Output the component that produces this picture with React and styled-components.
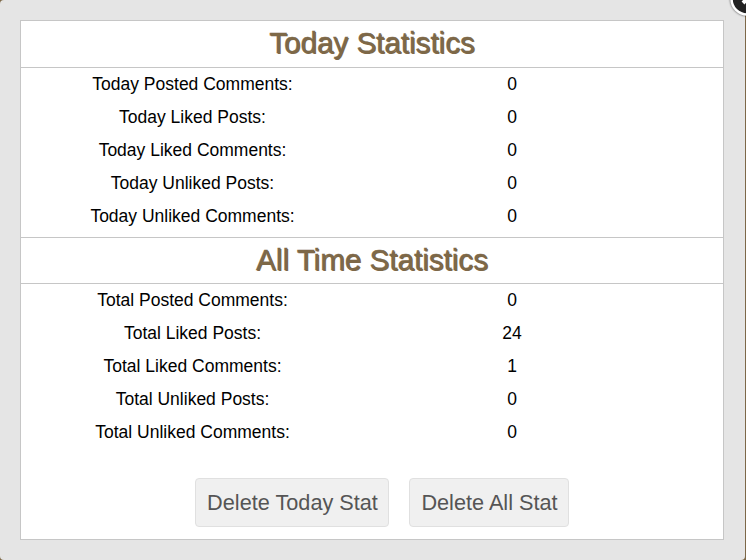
import styled, { createGlobalStyle } from "styled-components";

const GlobalStyle = createGlobalStyle`
  body {
    margin: 0;
    background-color: #7d6848;
    font-family: "Liberation Sans", Arial, sans-serif;
    overflow: hidden;
  }
`;

const Popup = styled.div`
  position: relative;
  box-sizing: border-box;
  width: 745px;
  height: 560px;
  padding: 20px 21px 20px 20px;
  border-radius: 4px;
  background-color: #e5e5e5;
`;

const CloseButton = styled.svg`
  position: absolute;
  top: -19px;
  right: -20px;
  width: 36px;
  height: 36px;
  filter: drop-shadow(0 0 1px rgba(0, 0, 0, 0.7));
`;

const Panel = styled.div`
  box-sizing: border-box;
  height: 520px;
  border: 1px solid #c6c6c6;
  background-color: #fff;
`;

const Title = styled.h2`
  box-sizing: border-box;
  height: 47px;
  margin: 0;
  border-top: ${(props) => (props.$first ? "none" : "1px solid #c6c6c6")};
  border-bottom: 1px solid #c6c6c6;
  color: #7d6848;
  font-size: 29.6px;
  font-weight: normal;
  line-height: 43px;
  text-align: center;
  text-shadow: 1px 1px 0 #7d6848;
  -webkit-text-stroke: 0.3px #7d6848;
`;

const Rows = styled.div`
  height: ${(props) => props.$height}px;
`;

const Row = styled.div`
  display: grid;
  grid-template-columns: 343px 296px;
  height: 33px;
  color: #000;
  font-size: 17.5px;
  line-height: 33px;
  text-align: center;
`;

const Buttons = styled.div`
  display: flex;
  gap: 20px;
  padding: 32px 0 0 174px;
`;

const Button = styled.button`
  box-sizing: border-box;
  width: ${(props) => props.$width}px;
  height: 49px;
  padding: 0 0 0 1px;
  border: 1px solid #e0e0e0;
  border-radius: 4px;
  background-color: #f0f0f0;
  color: #555;
  font-family: inherit;
  font-size: 21.7px;
  white-space: nowrap;
`;

const today = [
  ["Today Posted Comments:", 0],
  ["Today Liked Posts:", 0],
  ["Today Liked Comments:", 0],
  ["Today Unliked Posts:", 0],
  ["Today Unliked Comments:", 0],
];

const allTime = [
  ["Total Posted Comments:", 0],
  ["Total Liked Posts:", 24],
  ["Total Liked Comments:", 1],
  ["Total Unliked Posts:", 0],
  ["Total Unliked Comments:", 0],
];

const Stats = ({ items, height }) => (
  <Rows $height={height}>
    {items.map(([label, value]) => (
      <Row key={label}>
        <span>{label}</span>
        <span>{value}</span>
      </Row>
    ))}
  </Rows>
);

const App = () => {
  return (
    <>
      <GlobalStyle />
      <Popup>
        <Panel>
          <Title $first>Today Statistics</Title>
          <Stats items={today} height={169} />
          <Title>All Time Statistics</Title>
          <Stats items={allTime} height={162} />
          <Buttons>
            <Button $width={194}>Delete Today Stat</Button>
            <Button $width={160}>Delete All Stat</Button>
          </Buttons>
        </Panel>
        <CloseButton viewBox="0 0 36 36">
          <circle cx="18" cy="18" r="16.7" fill="#fff" />
          <circle cx="18" cy="18" r="14.2" fill="#222" />
          <path d="M14 14l8 8M22 14L14 22" stroke="#fff" strokeWidth="4" />
        </CloseButton>
      </Popup>
    </>
  );
};

export default App;
